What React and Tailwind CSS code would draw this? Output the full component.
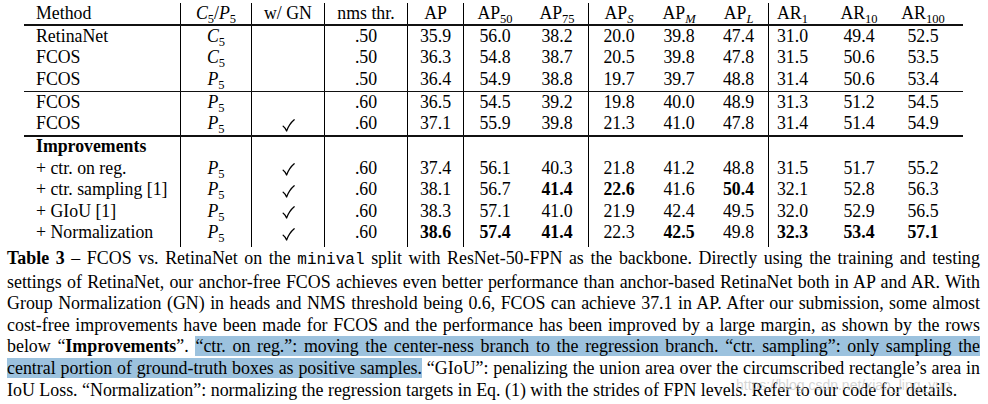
import React from "react";

const COLS =
  "grid grid-cols-[157px_71px_73px_83px_56px_62px_63px_60px_60px_60px_47px_86px_42px_19px]";

// indices of columns that have a right border
const BORDER = new Set([0, 1, 2, 3, 4, 6, 9]);

const Sub = ({ children, italic }) => (
  <span
    className={`relative top-[4px] text-[12.5px] ${italic ? "italic" : ""}`}
  >
    {children}
  </span>
);

const I = ({ children }) => <span className="italic">{children}</span>;

const Check = () => (
  <svg width="13" height="13" viewBox="0 0 13 13" className="relative top-[1px]">
    <path
      d="M1.2 7.2 C2.6 8.2 3.6 9.6 4.6 12 C6.4 7.2 8.8 3.6 12.2 0.8"
      fill="none"
      stroke="#000"
      strokeWidth="1.3"
      strokeLinecap="round"
      strokeLinejoin="round"
    />
  </svg>
);

const Row = ({ cells, h }) => (
  <div className={`${COLS} ${h}`}>
    {Array.from({ length: 14 }).map((_, i) => {
      const c = cells ? cells[i] : null;
      const border = BORDER.has(i) ? "border-r border-black" : "";
      const align = i === 0 ? "justify-start pl-[12px]" : "justify-center";
      return (
        <div
          key={i}
          className={`flex items-center ${align} ${border} whitespace-nowrap h-full`}
        >
          {c}
        </div>
      );
    })}
  </div>
);

const B = ({ children }) => <span className="font-bold">{children}</span>;

const P5 = (
  <span>
    <I>P</I>
    <Sub>5</Sub>
  </span>
);
const C5 = (
  <span>
    <I>C</I>
    <Sub>5</Sub>
  </span>
);

const header = [
  "Method",
  <span>
    <I>C</I>
    <Sub>5</Sub>/<I>P</I>
    <Sub>5</Sub>
  </span>,
  "w/ GN",
  "nms thr.",
  "AP",
  <span>
    AP<Sub>50</Sub>
  </span>,
  <span>
    AP<Sub>75</Sub>
  </span>,
  <span>
    AP<Sub italic>S</Sub>
  </span>,
  <span>
    AP<Sub italic>M</Sub>
  </span>,
  <span>
    AP<Sub italic>L</Sub>
  </span>,
  <span>
    AR<Sub>1</Sub>
  </span>,
  <span>
    AR<Sub>10</Sub>
  </span>,
  <span>
    AR<Sub>100</Sub>
  </span>,
  null,
];

const mk = (name, cp, gn, nms, vals, bold = []) => [
  name,
  cp,
  gn ? <Check /> : null,
  nms,
  ...vals.map((v, i) => (bold.includes(i) ? <B>{v}</B> : v)),
  null,
];

const block1 = [
  mk("RetinaNet", C5, false, ".50", ["35.9", "56.0", "38.2", "20.0", "39.8", "47.4", "31.0", "49.4", "52.5"]),
  mk("FCOS", C5, false, ".50", ["36.3", "54.8", "38.7", "20.5", "39.8", "47.8", "31.5", "50.6", "53.5"]),
  mk("FCOS", P5, false, ".50", ["36.4", "54.9", "38.8", "19.7", "39.7", "48.8", "31.4", "50.6", "53.4"]),
];
const block2 = [
  mk("FCOS", P5, false, ".60", ["36.5", "54.5", "39.2", "19.8", "40.0", "48.9", "31.3", "51.2", "54.5"]),
  mk("FCOS", P5, true, ".60", ["37.1", "55.9", "39.8", "21.3", "41.0", "47.8", "31.4", "51.4", "54.9"]),
];
const block3 = [
  [<B>Improvements</B>],
  mk("+ ctr. on reg.", P5, true, ".60", ["37.4", "56.1", "40.3", "21.8", "41.2", "48.8", "31.5", "51.7", "55.2"]),
  mk("+ ctr. sampling [1]", P5, true, ".60", ["38.1", "56.7", "41.4", "22.6", "41.6", "50.4", "32.1", "52.8", "56.3"], [2, 3, 5]),
  mk("+ GIoU [1]", P5, true, ".60", ["38.3", "57.1", "41.0", "21.9", "42.4", "49.5", "32.0", "52.9", "56.5"]),
  mk("+ Normalization", P5, true, ".60", ["38.6", "57.4", "41.4", "22.3", "42.5", "49.8", "32.3", "53.4", "57.1"], [0, 1, 2, 4, 6, 7, 8]),
];

const Hl = ({ children }) => (
  <span className="bg-[#9cc2de]">{children}</span>
);

const J = "block text-justify [text-align-last:justify]";

export default function App() {
  return (
    <div className="relative w-[988px] h-[404px] overflow-hidden bg-white text-black font-['Liberation_Serif',serif] text-[17.8px] leading-none">
      <div className="pt-[3px] pl-[24px] w-[963px]">
        <Row cells={header} h="h-[21px]" />
        <div className="h-[2px] bg-[#111]" />
        {block1.map((r, i) => (
          <Row key={i} cells={r} h="h-[21.5px]" />
        ))}
        <div className="h-[1.5px] bg-[#111]" />
        {block2.map((r, i) => (
          <Row key={i} cells={r} h="h-[21.5px]" />
        ))}
        <div className="h-[1.5px] bg-[#111]" />
        {block3.map((r, i) => (
          <Row key={i} cells={r} h="h-[21.5px]" />
        ))}
        <Row h="h-[3px]" />
      </div>

      <div className="pl-[7px] w-[980px] pt-[1px] leading-[21.6px] text-[17.9px]">
        <div className={J}>
          <B>Table 3</B> – FCOS vs. RetinaNet on the{" "}
          <span className="font-['Liberation_Mono',monospace] text-[16px]">minival</span>{" "}
          split with ResNet-50-FPN as the backbone. Directly using the training and testing
        </div>
        <div className={J}>
          settings of RetinaNet, our anchor-free FCOS achieves even better performance than anchor-based RetinaNet both in AP and AR. With
        </div>
        <div className={J}>
          Group Normalization (GN) in heads and NMS threshold being 0.6, FCOS can achieve 37.1 in AP. After our submission, some almost
        </div>
        <div className={J}>
          cost-free improvements have been made for FCOS and the performance has been improved by a large margin, as shown by the rows
        </div>
        <div className={J}>
          below “<B>Improvements</B>”.{" "}
          <Hl>
            “ctr. on reg.”: moving the center-ness branch to the regression branch. “ctr. sampling”: only sampling the
          </Hl>
        </div>
        <div className={J}>
          <Hl>central portion of ground-truth boxes as positive samples.</Hl> “GIoU”: penalizing the union area over the circumscribed rectangle’s area in
        </div>
        <div className="block">
          IoU Loss. “Normalization”: normalizing the regression targets in Eq. (1) with the strides of FPN levels. Refer to our code for details.
        </div>
      </div>

      <div className="absolute left-[736px] top-[378px] text-[14px] font-['Liberation_Sans',sans-serif] text-[#c4c4c4]/70 whitespace-nowrap">
        https://blog.csdn.net/xiao_ling_yun
      </div>
    </div>
  );
}
